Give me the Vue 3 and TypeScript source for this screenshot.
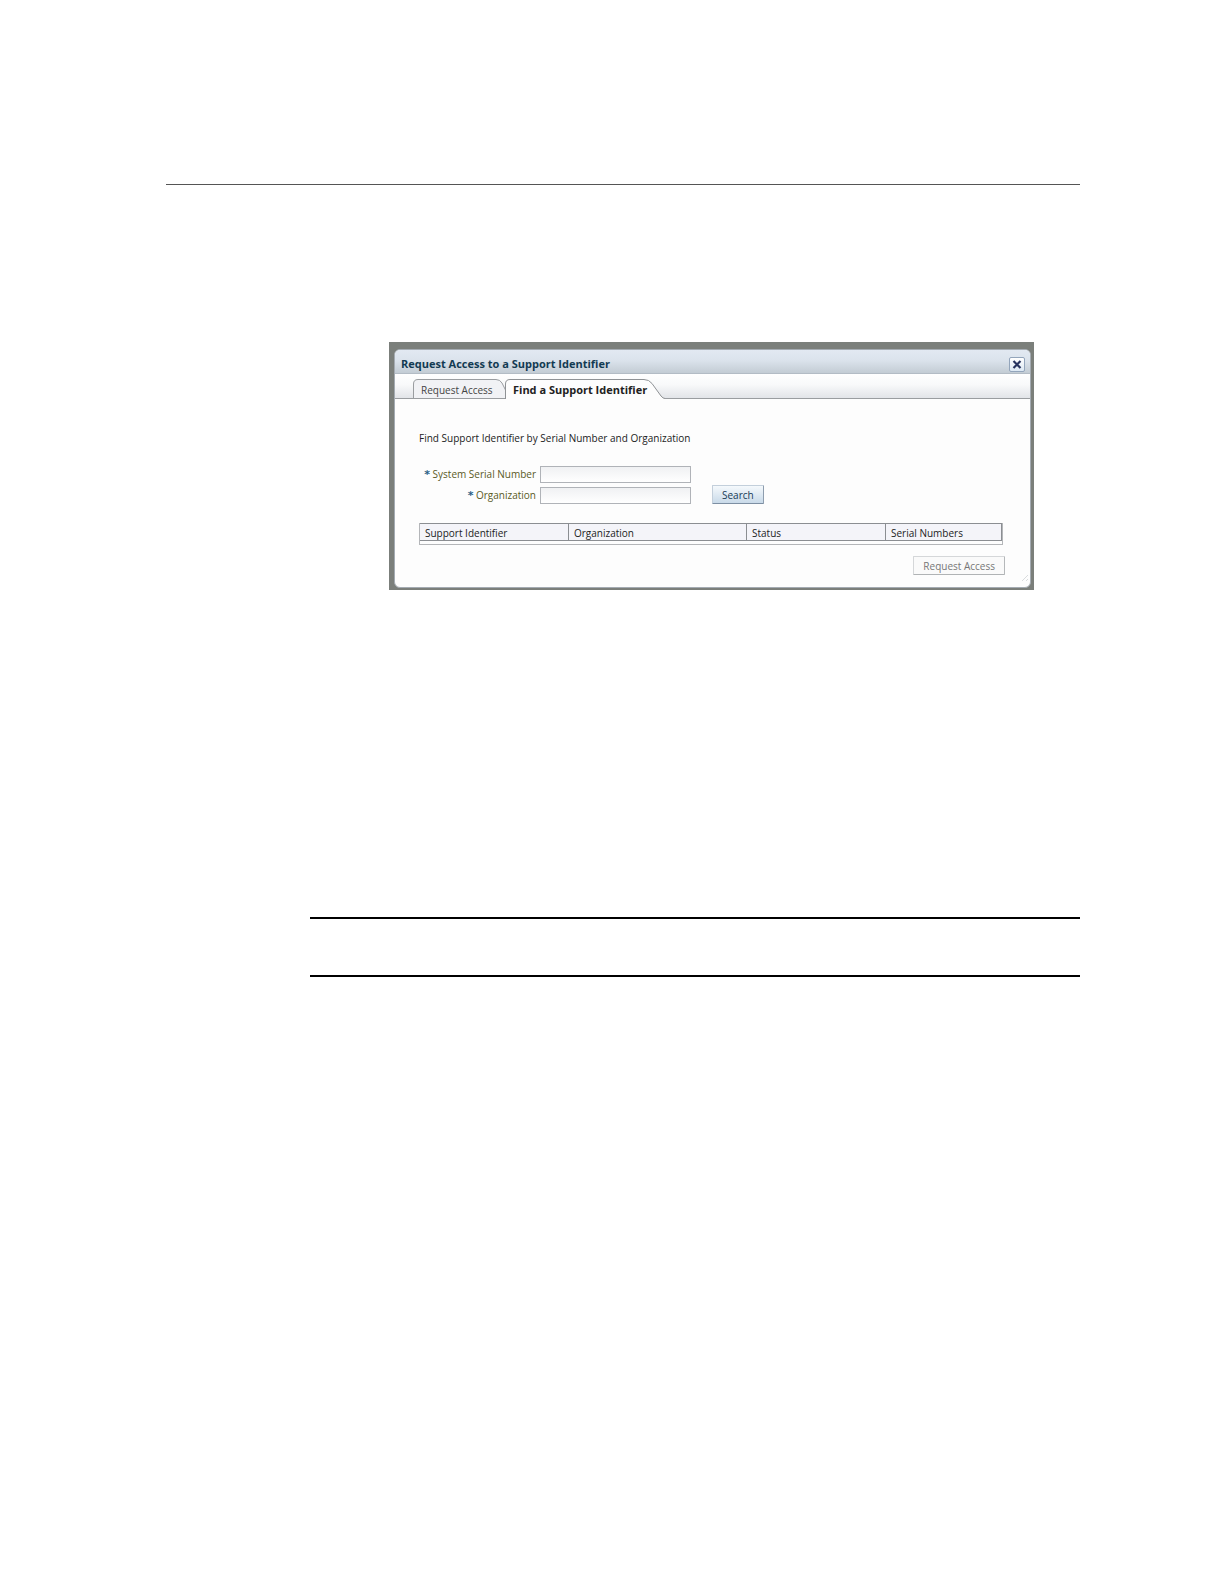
<script setup lang="ts">
import { ref } from 'vue'

const serial = ref('')
const organization = ref('')
const columns: string[] = ['Support Identifier', 'Organization', 'Status', 'Serial Numbers']
</script>

<template>
  <main class="page">
    <hr class="head-rule" />
    <div class="content">
      <div class="backdrop">
        <section class="dialog" role="dialog" aria-labelledby="dialog-title">
          <header class="title-bar">
            <h1 id="dialog-title">Request Access to a Support Identifier</h1>
            <button class="close" type="button" aria-label="Close">
              <svg width="10" height="9" viewBox="0 0 10 9" aria-hidden="true">
                <path d="M1.5 1L8.5 8M8.5 1L1.5 8" fill="none" stroke="#27335f" stroke-width="2.2" />
              </svg>
            </button>
          </header>

          <div class="tabs" role="tablist">
            <button class="tab first" type="button" role="tab" aria-selected="false">
              <svg class="shape" width="93" height="20" viewBox="0 0 93 20" aria-hidden="true">
                <path d="M0.5 20V5Q0.5 0.5 5 0.5H83Q87 0.5 89 4L92.5 11V20Z" fill="#f1f2f5" />
                <path d="M0.5 20V5Q0.5 0.5 5 0.5H83Q87 0.5 89 4L92.5 11" fill="none" stroke="#9a9da0" />
                <path d="M0 19.5H93" stroke="#9a9da0" />
              </svg>
              <span>Request Access</span>
            </button>
            <button class="tab active" type="button" role="tab" aria-selected="true">
              <svg class="shape" width="160" height="20" viewBox="0 0 160 20" aria-hidden="true">
                <path d="M0.5 20V5Q0.5 0.5 5 0.5H139Q144 0.5 147 4.5L156 17Q158 19.5 160 19.5V20Z" fill="#fdfdfd" />
                <path d="M0.5 20V5Q0.5 0.5 5 0.5H139Q144 0.5 147 4.5L156 17Q158 19.5 160 19.5" fill="none" stroke="#8f9295" />
              </svg>
              <span>Find a Support Identifier</span>
            </button>
          </div>

          <div class="panel">
            <p class="intro">Find Support Identifier by Serial Number and Organization</p>
            <form class="search" @submit.prevent>
              <div class="fields">
                <label for="serial"><b>*</b> System Serial Number</label>
                <input id="serial" v-model="serial" type="text" />
                <label for="organization"><b>*</b> Organization</label>
                <input id="organization" v-model="organization" type="text" />
              </div>
              <button class="button" type="submit">Search</button>
            </form>

            <div class="results">
              <table>
                <thead>
                  <tr>
                    <th v-for="column in columns" :key="column" scope="col">{{ column }}</th>
                  </tr>
                </thead>
              </table>
            </div>

            <div class="actions">
              <button class="button" type="button" disabled>Request Access</button>
            </div>
          </div>
          <svg class="grip" width="8" height="8" viewBox="0 0 8 8" aria-hidden="true">
            <path d="M1 7L7 1M5 7L7 5" stroke="#d9dcde" />
          </svg>
        </section>
      </div>
      <div class="note"></div>
    </div>
  </main>
</template>

<style>
body {
  background: #fff;
}
</style>

<style scoped>
.page {
  padding: 184px 144px 0 166px;
  font-family: 'Open Sans', 'Noto Sans', sans-serif;
  font-size: 10px;
  line-height: 14px;
  color: #222;
}
.head-rule {
  height: 1px;
  margin: 0;
  border: 0;
  background: #555;
}
.content {
  padding: 157px 0 0 144px;
}
.backdrop {
  margin: 0 46px 0 79px;
  padding: 7px 3px 2px 5px;
  background: #7b7f7b;
}
.dialog {
  position: relative;
  border: 1px solid #a4abb2;
  border-radius: 6px;
  background: #fdfdfd;
  overflow: hidden;
}
.title-bar {
  display: flex;
  align-items: center;
  justify-content: space-between;
  box-sizing: border-box;
  height: 24px;
  padding: 5px 5px 0 6px;
  border-bottom: 1px solid #b3bcc5;
  background: linear-gradient(#e2e9f2, #dbe3ec 45%, #c3ccd4);
}
h1 {
  margin: 0;
  font-size: 11px;
  line-height: 14px;
  color: #123a52;
}
.close {
  display: flex;
  align-items: center;
  justify-content: center;
  width: 16px;
  height: 15px;
  padding: 0;
  border: 1px solid #93a5bb;
  border-radius: 2px;
  background: linear-gradient(#fff, #dce8f3);
}
.tabs {
  display: flex;
  align-items: flex-end;
  height: 24px;
  padding-left: 18px;
  border-bottom: 1px solid #9a9da0;
  background: linear-gradient(#fff, #f8f9fa 45%, #e2e4e8);
}
.tab {
  position: relative;
  height: 20px;
  margin-bottom: -1px;
  padding: 2px 0 0 8px;
  border: 0;
  background: none;
  font: inherit;
  color: #444;
  text-align: left;
}
.tab span {
  position: relative;
}
.shape {
  position: absolute;
  left: 0;
  top: 0;
}
.first {
  width: 92px;
}
.active {
  width: 160px;
  font-size: 11px;
  font-weight: bold;
  color: #222;
}
.panel {
  padding: 32px 27px 12px 24px;
}
.intro {
  margin: 0 0 21px;
}
.search {
  display: flex;
  align-items: flex-end;
  gap: 21px;
}
.fields {
  display: grid;
  grid-template-columns: 121px 151px;
  row-gap: 4px;
  align-items: center;
}
label {
  padding-right: 4px;
  color: #5a5a1e;
  text-align: right;
  white-space: nowrap;
}
label b {
  font-family: 'DejaVu Sans', sans-serif;
  font-size: 11px;
  color: #2a5f86;
}
input {
  box-sizing: border-box;
  width: 100%;
  height: 17px;
  padding: 0 4px;
  border: 1px solid #b0b3b8;
  background: linear-gradient(#f0f1f3, #fff);
  font: inherit;
}
.button {
  height: 19px;
  padding: 0 9px;
  border: 1px solid #c3cfdb;
  border-right-color: #8e9dae;
  border-bottom-color: #7d8fa3;
  border-radius: 1px;
  background: linear-gradient(#f5f9fc, #c9dae9);
  font: inherit;
  color: #173a55;
}
.button:disabled {
  border-color: #d5d7d9 #b5b8ba #b0b3b5 #d5d7d9;
  background: #fafafa;
  color: #777;
}
.results {
  margin-top: 19px;
  padding-bottom: 3px;
  border: 1px solid #b4b6b9;
  border-top: 0;
}
table {
  width: 100%;
  border-collapse: separate;
  border-spacing: 0;
  table-layout: fixed;
}
th {
  box-sizing: border-box;
  height: 18px;
  padding: 2px 5px 0;
  border: 1px solid #8b8e92;
  border-left: 0;
  background: #f4f4f9;
  font-weight: normal;
  text-align: left;
}
th:nth-child(1) {
  width: 149px;
}
th:nth-child(2) {
  width: 178px;
}
th:nth-child(3) {
  width: 139px;
}
.actions {
  display: flex;
  justify-content: flex-end;
  margin: 11px -2px 0 0;
}
.grip {
  position: absolute;
  right: 1px;
  bottom: 5px;
}
.note {
  height: 56px;
  margin-top: 327px;
  border-top: 2px solid #000;
  border-bottom: 2px solid #000;
}
</style>
